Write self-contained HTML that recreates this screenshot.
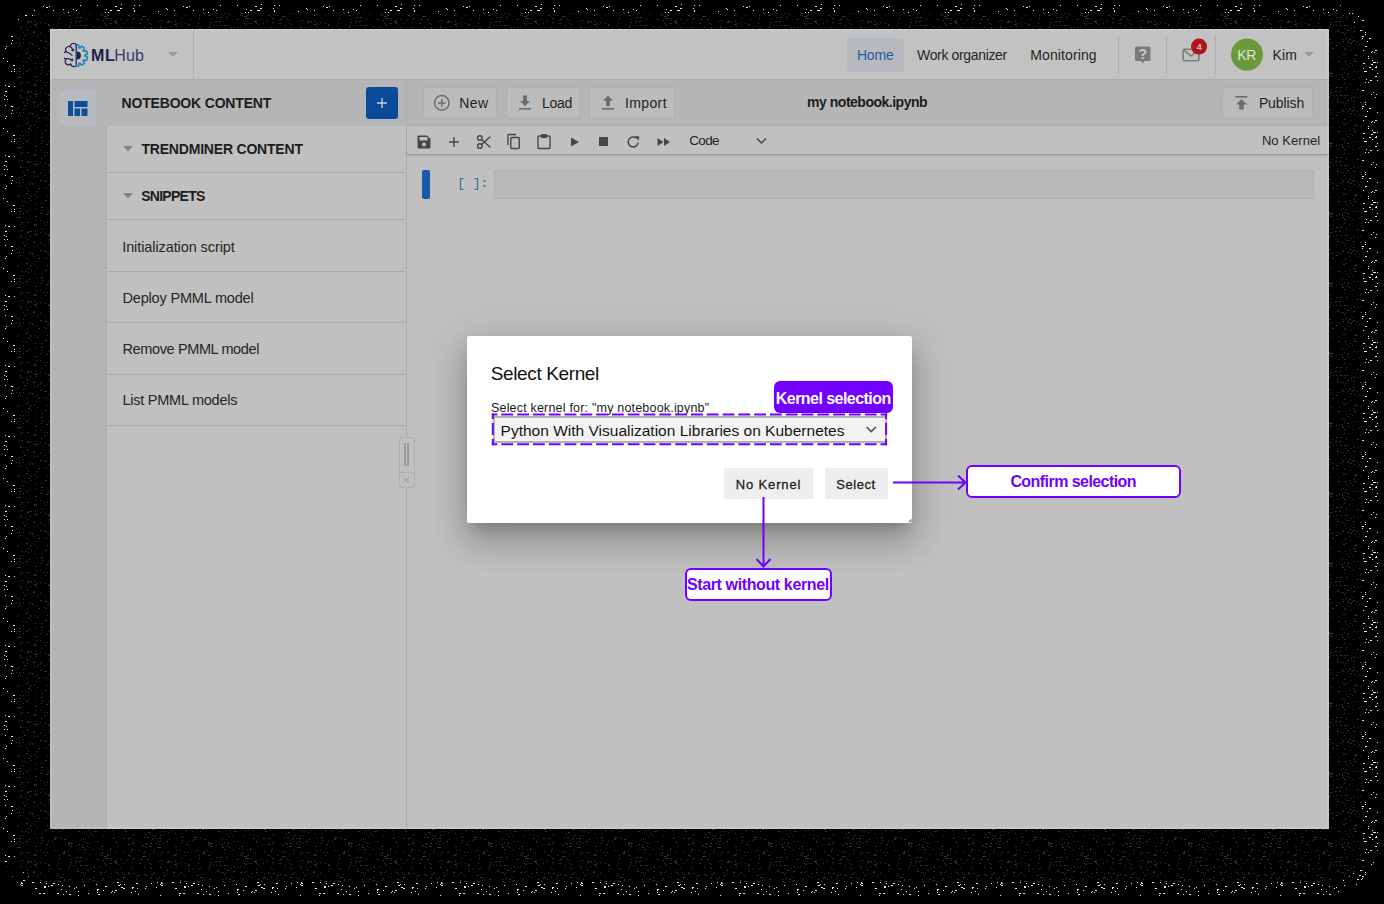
<!DOCTYPE html>
<html><head><meta charset='utf-8'><style>
html,body{margin:0;padding:0;background:#000;}
body{width:1384px;height:904px;background:#000;position:relative;overflow:hidden;font-family:"Liberation Sans",sans-serif;}
body>div,body>svg{position:absolute;box-sizing:border-box;}
</style></head><body>
<svg style='left:0;top:0' width='1384' height='904'><defs>
<pattern id='pb' width='140' height='70' patternUnits='userSpaceOnUse'><path fill='#e8e8e8' d='M21 0h1v1h-1zM49 0h2v1h-2zM136 0h1v1h-1zM11 1h1v1h-1zM14 1h1v1h-1zM60 1h1v1h-1zM104 1h2v1h-2zM106 1h1v1h-1zM120 1h1v1h-1zM64 2h1v1h-1zM89 2h2v1h-2zM135 2h2v1h-2zM27 3h1v1h-1zM36 3h1v1h-1zM62 3h1v1h-1zM78 3h1v1h-1zM117 3h2v1h-2zM121 4h1v1h-1zM80 5h1v1h-1zM97 5h1v1h-1zM134 5h1v1h-1zM139 5h1v1h-1zM43 6h1v1h-1zM49 6h1v1h-1zM115 6h2v1h-2zM46 7h2v1h-2zM26 8h1v1h-1zM120 8h2v1h-2zM133 8h1v1h-1zM27 9h1v1h-1zM63 9h1v1h-1zM73 9h1v1h-1zM106 9h1v1h-1zM34 10h1v1h-1zM53 10h1v1h-1zM76 10h1v1h-1zM110 10h2v1h-2zM117 10h2v1h-2zM119 10h1v1h-1zM134 10h1v1h-1zM18 11h1v1h-1zM134 11h1v1h-1zM68 12h1v1h-1zM105 12h1v1h-1zM108 12h1v1h-1zM0 13h2v1h-2zM50 13h1v1h-1zM52 13h1v1h-1zM89 13h1v1h-1zM92 13h1v1h-1zM63 14h1v1h-1zM5 15h1v1h-1zM18 15h2v1h-2zM25 15h2v1h-2zM32 15h1v1h-1zM83 15h1v1h-1zM1 16h1v1h-1zM8 16h2v1h-2zM14 16h1v1h-1zM53 16h1v1h-1zM98 16h1v1h-1zM129 16h2v1h-2zM83 17h2v1h-2zM137 17h1v1h-1zM55 18h1v1h-1zM121 18h1v1h-1zM135 18h1v1h-1zM18 19h1v1h-1zM47 19h2v1h-2zM67 19h2v1h-2zM127 19h1v1h-1zM44 20h1v1h-1zM102 20h2v1h-2zM103 20h1v1h-1zM5 21h2v1h-2zM27 21h1v1h-1zM63 21h1v1h-1zM43 22h1v1h-1zM94 22h1v1h-1zM113 22h1v1h-1zM24 23h1v1h-1zM76 23h1v1h-1zM87 23h1v1h-1zM91 23h2v1h-2zM126 23h2v1h-2zM25 24h2v1h-2zM85 24h1v1h-1zM93 24h1v1h-1zM111 24h1v1h-1zM116 24h1v1h-1zM126 24h1v1h-1zM4 25h1v1h-1zM58 25h1v1h-1zM64 25h1v1h-1zM84 25h1v1h-1zM6 26h1v1h-1zM30 26h2v1h-2zM120 26h2v1h-2zM124 26h1v1h-1zM29 27h1v1h-1zM86 27h1v1h-1zM115 27h1v1h-1zM32 28h2v1h-2zM39 28h2v1h-2zM40 28h2v1h-2zM119 28h1v1h-1zM4 29h1v1h-1zM7 29h1v1h-1zM69 29h1v1h-1zM77 29h1v1h-1zM125 29h1v1h-1zM24 30h1v1h-1zM58 30h1v1h-1zM71 30h1v1h-1zM100 30h2v1h-2zM132 30h1v1h-1zM61 31h2v1h-2zM118 31h1v1h-1zM23 32h1v1h-1zM31 32h1v1h-1zM75 32h1v1h-1zM105 32h1v1h-1zM126 32h1v1h-1zM131 32h1v1h-1zM29 33h2v1h-2zM93 33h1v1h-1zM139 33h1v1h-1zM53 34h2v1h-2zM56 34h1v1h-1zM90 34h1v1h-1zM105 34h1v1h-1zM5 35h1v1h-1zM99 35h2v1h-2zM136 35h1v1h-1zM11 36h2v1h-2zM28 36h1v1h-1zM37 36h1v1h-1zM40 36h1v1h-1zM89 36h1v1h-1zM102 36h2v1h-2zM49 37h1v1h-1zM102 38h1v1h-1zM109 38h2v1h-2zM128 38h1v1h-1zM137 38h1v1h-1zM37 39h1v1h-1zM77 39h1v1h-1zM97 39h1v1h-1zM98 39h1v1h-1zM101 39h1v1h-1zM12 40h1v1h-1zM23 40h2v1h-2zM66 40h1v1h-1zM83 40h1v1h-1zM133 40h1v1h-1zM107 41h1v1h-1zM17 42h1v1h-1zM21 42h1v1h-1zM32 42h2v1h-2zM40 42h1v1h-1zM117 42h2v1h-2zM11 43h1v1h-1zM21 43h2v1h-2zM46 43h1v1h-1zM53 43h2v1h-2zM136 43h2v1h-2zM20 44h1v1h-1zM58 44h1v1h-1zM96 44h1v1h-1zM120 44h1v1h-1zM124 44h1v1h-1zM21 45h2v1h-2zM51 45h2v1h-2zM62 45h1v1h-1zM84 45h1v1h-1zM118 45h2v1h-2zM6 46h1v1h-1zM44 46h2v1h-2zM48 46h1v1h-1zM69 46h1v1h-1zM105 46h2v1h-2zM16 47h1v1h-1zM44 47h2v1h-2zM76 47h1v1h-1zM121 47h2v1h-2zM132 47h2v1h-2zM5 48h1v1h-1zM35 48h2v1h-2zM74 48h1v1h-1zM123 48h2v1h-2zM132 48h1v1h-1zM137 48h1v1h-1zM61 49h1v1h-1zM97 49h2v1h-2zM97 50h1v1h-1zM103 50h1v1h-1zM115 50h2v1h-2zM66 51h1v1h-1zM78 51h1v1h-1zM112 51h1v1h-1zM135 51h1v1h-1zM97 52h1v1h-1zM111 52h1v1h-1zM114 52h1v1h-1zM131 52h1v1h-1zM39 53h2v1h-2zM43 53h2v1h-2zM57 53h2v1h-2zM88 53h1v1h-1zM63 54h1v1h-1zM69 54h2v1h-2zM98 54h2v1h-2zM138 54h1v1h-1zM20 55h1v1h-1zM39 55h1v1h-1zM78 55h1v1h-1zM30 56h1v1h-1zM71 56h1v1h-1zM108 56h1v1h-1zM131 56h1v1h-1zM41 57h1v1h-1zM59 57h1v1h-1zM65 57h1v1h-1zM76 57h2v1h-2zM3 58h1v1h-1zM16 58h1v1h-1zM35 58h1v1h-1zM64 58h1v1h-1zM83 58h1v1h-1zM108 58h1v1h-1zM29 59h1v1h-1zM121 59h1v1h-1zM16 60h1v1h-1zM19 60h1v1h-1zM38 60h1v1h-1zM112 60h1v1h-1zM7 61h1v1h-1zM46 61h1v1h-1zM79 61h1v1h-1zM90 61h1v1h-1zM95 61h1v1h-1zM1 62h1v1h-1zM45 62h1v1h-1zM96 62h1v1h-1zM113 62h1v1h-1zM114 62h2v1h-2zM117 62h2v1h-2zM119 62h2v1h-2zM126 62h1v1h-1zM133 62h2v1h-2zM21 63h1v1h-1zM48 63h1v1h-1zM56 63h2v1h-2zM103 63h1v1h-1zM104 63h1v1h-1zM38 64h1v1h-1zM111 64h2v1h-2zM136 64h1v1h-1zM13 65h2v1h-2zM20 65h1v1h-1zM34 65h1v1h-1zM49 65h1v1h-1zM91 65h1v1h-1zM61 66h1v1h-1zM116 66h1v1h-1zM122 66h2v1h-2zM38 67h1v1h-1zM109 67h2v1h-2zM115 67h2v1h-2zM43 68h2v1h-2zM103 68h1v1h-1zM118 68h2v1h-2zM121 68h1v1h-1zM132 68h2v1h-2zM14 69h1v1h-1zM28 69h2v1h-2zM112 69h1v1h-1zM118 69h1v1h-1zM136 69h1v1h-1z'/></pattern>
<pattern id='pd' width='140' height='70' patternUnits='userSpaceOnUse' x='37' y='23'><path fill='#343434' d='M0 0h1v1h-1zM8 0h1v1h-1zM21 0h1v1h-1zM67 0h1v1h-1zM72 0h1v1h-1zM74 0h1v1h-1zM79 0h1v1h-1zM86 0h1v1h-1zM102 0h2v1h-2zM112 0h1v1h-1zM11 1h1v1h-1zM33 1h1v1h-1zM69 1h1v1h-1zM81 1h1v1h-1zM114 1h1v1h-1zM137 1h2v1h-2zM138 1h2v1h-2zM11 2h2v1h-2zM12 2h1v1h-1zM20 2h1v1h-1zM36 2h1v1h-1zM39 2h1v1h-1zM43 2h2v1h-2zM47 2h1v1h-1zM49 2h2v1h-2zM68 2h1v1h-1zM108 2h1v1h-1zM123 2h1v1h-1zM32 3h1v1h-1zM56 3h1v1h-1zM63 3h1v1h-1zM133 3h1v1h-1zM139 3h1v1h-1zM32 4h1v1h-1zM57 4h1v1h-1zM61 4h1v1h-1zM83 4h1v1h-1zM94 4h1v1h-1zM107 4h1v1h-1zM113 4h1v1h-1zM123 4h2v1h-2zM128 4h1v1h-1zM15 5h1v1h-1zM22 5h1v1h-1zM23 5h1v1h-1zM48 5h1v1h-1zM54 5h1v1h-1zM114 5h1v1h-1zM12 6h1v1h-1zM31 6h1v1h-1zM40 6h1v1h-1zM79 6h1v1h-1zM96 6h1v1h-1zM130 6h1v1h-1zM50 7h2v1h-2zM130 7h1v1h-1zM11 8h1v1h-1zM40 8h2v1h-2zM56 8h2v1h-2zM69 8h1v1h-1zM137 8h1v1h-1zM4 9h1v1h-1zM44 9h1v1h-1zM46 9h1v1h-1zM63 9h2v1h-2zM67 9h1v1h-1zM79 9h2v1h-2zM85 9h1v1h-1zM91 9h1v1h-1zM117 9h1v1h-1zM126 9h1v1h-1zM136 9h2v1h-2zM3 10h1v1h-1zM48 10h1v1h-1zM74 10h1v1h-1zM91 10h2v1h-2zM96 10h2v1h-2zM116 10h1v1h-1zM130 10h1v1h-1zM1 11h1v1h-1zM26 11h1v1h-1zM64 11h1v1h-1zM81 11h1v1h-1zM87 11h1v1h-1zM103 11h1v1h-1zM107 11h1v1h-1zM114 11h2v1h-2zM7 12h1v1h-1zM20 12h2v1h-2zM47 12h1v1h-1zM93 12h1v1h-1zM100 12h2v1h-2zM108 12h2v1h-2zM127 12h2v1h-2zM0 13h1v1h-1zM71 13h1v1h-1zM137 13h1v1h-1zM23 14h2v1h-2zM24 14h2v1h-2zM56 14h1v1h-1zM74 14h1v1h-1zM86 14h1v1h-1zM87 14h2v1h-2zM94 14h1v1h-1zM100 14h1v1h-1zM113 14h2v1h-2zM114 14h1v1h-1zM122 14h1v1h-1zM49 15h1v1h-1zM66 15h1v1h-1zM86 15h1v1h-1zM104 15h1v1h-1zM119 15h1v1h-1zM27 16h1v1h-1zM32 16h2v1h-2zM45 16h1v1h-1zM52 16h2v1h-2zM65 16h1v1h-1zM80 16h2v1h-2zM90 16h1v1h-1zM99 16h1v1h-1zM121 16h1v1h-1zM126 16h1v1h-1zM3 17h2v1h-2zM20 17h1v1h-1zM27 17h1v1h-1zM56 17h2v1h-2zM57 17h1v1h-1zM65 17h1v1h-1zM102 17h1v1h-1zM7 18h2v1h-2zM9 18h1v1h-1zM13 18h1v1h-1zM17 18h1v1h-1zM21 18h1v1h-1zM22 18h2v1h-2zM45 18h2v1h-2zM51 18h1v1h-1zM55 18h1v1h-1zM60 18h1v1h-1zM84 18h2v1h-2zM100 18h1v1h-1zM107 18h1v1h-1zM33 19h1v1h-1zM41 19h1v1h-1zM50 19h1v1h-1zM69 19h1v1h-1zM74 19h1v1h-1zM75 19h1v1h-1zM96 19h1v1h-1zM118 19h2v1h-2zM122 19h1v1h-1zM126 19h1v1h-1zM132 19h1v1h-1zM15 20h1v1h-1zM35 20h1v1h-1zM43 20h1v1h-1zM53 20h2v1h-2zM77 20h2v1h-2zM122 20h1v1h-1zM134 20h2v1h-2zM11 21h1v1h-1zM20 21h1v1h-1zM32 21h1v1h-1zM58 21h1v1h-1zM62 21h1v1h-1zM78 21h1v1h-1zM89 21h2v1h-2zM90 21h1v1h-1zM102 21h1v1h-1zM104 21h1v1h-1zM112 21h1v1h-1zM132 21h1v1h-1zM135 21h1v1h-1zM0 22h1v1h-1zM24 22h1v1h-1zM39 22h1v1h-1zM40 22h1v1h-1zM76 22h1v1h-1zM100 22h1v1h-1zM123 22h1v1h-1zM52 23h1v1h-1zM61 23h1v1h-1zM72 23h1v1h-1zM121 23h1v1h-1zM137 23h1v1h-1zM7 24h1v1h-1zM24 24h1v1h-1zM100 24h2v1h-2zM112 24h1v1h-1zM1 25h2v1h-2zM9 25h1v1h-1zM21 25h1v1h-1zM35 25h2v1h-2zM48 25h1v1h-1zM106 25h1v1h-1zM130 25h1v1h-1zM24 26h1v1h-1zM47 26h1v1h-1zM84 26h2v1h-2zM104 26h1v1h-1zM21 27h2v1h-2zM26 27h1v1h-1zM53 27h1v1h-1zM73 27h2v1h-2zM87 27h1v1h-1zM21 28h2v1h-2zM96 28h1v1h-1zM101 28h2v1h-2zM131 28h1v1h-1zM139 28h1v1h-1zM45 29h1v1h-1zM77 29h2v1h-2zM25 30h1v1h-1zM49 30h1v1h-1zM72 30h2v1h-2zM98 30h1v1h-1zM129 30h2v1h-2zM46 31h2v1h-2zM59 31h1v1h-1zM79 31h2v1h-2zM84 31h1v1h-1zM102 31h1v1h-1zM109 31h1v1h-1zM10 32h1v1h-1zM57 32h1v1h-1zM58 32h2v1h-2zM99 32h1v1h-1zM121 32h1v1h-1zM133 32h1v1h-1zM137 32h1v1h-1zM19 33h2v1h-2zM63 33h1v1h-1zM67 33h1v1h-1zM104 33h1v1h-1zM120 33h1v1h-1zM133 33h1v1h-1zM0 34h1v1h-1zM31 34h1v1h-1zM34 34h1v1h-1zM42 34h1v1h-1zM70 34h1v1h-1zM80 34h1v1h-1zM81 34h1v1h-1zM112 34h1v1h-1zM18 35h1v1h-1zM21 35h2v1h-2zM56 35h1v1h-1zM74 35h2v1h-2zM97 35h1v1h-1zM100 35h1v1h-1zM131 35h1v1h-1zM132 35h1v1h-1zM19 36h1v1h-1zM25 36h2v1h-2zM29 36h1v1h-1zM57 36h1v1h-1zM71 36h1v1h-1zM87 36h1v1h-1zM88 36h1v1h-1zM108 36h1v1h-1zM115 36h1v1h-1zM116 36h2v1h-2zM8 37h2v1h-2zM52 37h1v1h-1zM75 37h1v1h-1zM93 37h1v1h-1zM134 37h1v1h-1zM15 38h1v1h-1zM23 38h1v1h-1zM41 38h2v1h-2zM48 38h1v1h-1zM57 38h2v1h-2zM59 38h1v1h-1zM68 38h1v1h-1zM88 38h2v1h-2zM125 38h1v1h-1zM128 38h1v1h-1zM111 39h1v1h-1zM112 39h1v1h-1zM131 39h1v1h-1zM4 40h1v1h-1zM53 40h1v1h-1zM138 40h1v1h-1zM49 41h1v1h-1zM72 41h1v1h-1zM77 41h1v1h-1zM96 41h1v1h-1zM108 41h1v1h-1zM55 42h1v1h-1zM66 42h1v1h-1zM96 42h1v1h-1zM115 42h1v1h-1zM118 42h1v1h-1zM123 42h1v1h-1zM126 42h1v1h-1zM51 43h1v1h-1zM81 43h1v1h-1zM117 43h1v1h-1zM4 44h2v1h-2zM17 44h2v1h-2zM19 44h1v1h-1zM107 44h1v1h-1zM110 44h2v1h-2zM23 45h1v1h-1zM46 45h1v1h-1zM76 45h2v1h-2zM86 45h2v1h-2zM91 45h2v1h-2zM116 45h1v1h-1zM119 45h1v1h-1zM122 45h2v1h-2zM139 45h1v1h-1zM17 46h2v1h-2zM27 46h2v1h-2zM44 46h1v1h-1zM48 46h1v1h-1zM115 46h1v1h-1zM132 46h1v1h-1zM5 47h1v1h-1zM15 47h1v1h-1zM11 48h1v1h-1zM57 48h1v1h-1zM61 48h1v1h-1zM79 48h1v1h-1zM96 48h1v1h-1zM120 48h1v1h-1zM122 48h2v1h-2zM129 48h2v1h-2zM5 49h1v1h-1zM31 49h2v1h-2zM47 49h1v1h-1zM79 49h1v1h-1zM3 50h1v1h-1zM28 50h1v1h-1zM32 50h2v1h-2zM34 50h2v1h-2zM50 50h2v1h-2zM95 50h2v1h-2zM108 50h2v1h-2zM113 50h2v1h-2zM119 50h1v1h-1zM126 50h1v1h-1zM9 51h2v1h-2zM31 51h1v1h-1zM34 51h1v1h-1zM42 51h1v1h-1zM45 51h1v1h-1zM85 51h1v1h-1zM91 51h2v1h-2zM110 51h1v1h-1zM122 51h1v1h-1zM32 52h1v1h-1zM39 52h1v1h-1zM45 52h1v1h-1zM105 52h2v1h-2zM33 53h2v1h-2zM50 53h1v1h-1zM64 53h1v1h-1zM65 53h1v1h-1zM80 53h1v1h-1zM112 53h2v1h-2zM114 53h1v1h-1zM138 53h2v1h-2zM45 54h2v1h-2zM52 54h1v1h-1zM109 54h1v1h-1zM120 54h2v1h-2zM121 54h1v1h-1zM122 54h2v1h-2zM62 55h1v1h-1zM73 55h1v1h-1zM41 56h1v1h-1zM47 56h2v1h-2zM56 56h1v1h-1zM65 56h1v1h-1zM73 56h1v1h-1zM94 56h2v1h-2zM117 56h1v1h-1zM3 57h1v1h-1zM18 57h1v1h-1zM20 57h1v1h-1zM30 57h1v1h-1zM73 57h1v1h-1zM102 57h1v1h-1zM139 57h1v1h-1zM27 58h1v1h-1zM87 58h1v1h-1zM94 58h1v1h-1zM108 58h1v1h-1zM117 58h1v1h-1zM7 59h1v1h-1zM10 59h1v1h-1zM26 59h2v1h-2zM78 59h1v1h-1zM106 59h2v1h-2zM124 59h2v1h-2zM130 59h2v1h-2zM26 60h2v1h-2zM47 60h1v1h-1zM64 60h1v1h-1zM65 60h1v1h-1zM116 60h1v1h-1zM52 61h1v1h-1zM112 61h1v1h-1zM123 61h1v1h-1zM137 61h1v1h-1zM139 61h1v1h-1zM8 62h1v1h-1zM22 62h1v1h-1zM31 62h2v1h-2zM63 62h1v1h-1zM65 62h1v1h-1zM70 62h2v1h-2zM91 62h2v1h-2zM100 62h1v1h-1zM137 62h2v1h-2zM67 63h2v1h-2zM69 63h1v1h-1zM93 63h1v1h-1zM105 63h2v1h-2zM107 63h2v1h-2zM22 64h1v1h-1zM39 64h2v1h-2zM43 64h2v1h-2zM49 64h1v1h-1zM4 65h1v1h-1zM68 65h2v1h-2zM70 65h2v1h-2zM74 65h1v1h-1zM95 65h2v1h-2zM13 66h1v1h-1zM22 66h1v1h-1zM34 66h1v1h-1zM49 66h1v1h-1zM60 66h2v1h-2zM83 66h1v1h-1zM90 66h1v1h-1zM103 66h2v1h-2zM110 66h1v1h-1zM66 67h1v1h-1zM74 67h1v1h-1zM79 67h1v1h-1zM101 67h1v1h-1zM111 67h1v1h-1zM124 67h2v1h-2zM38 68h2v1h-2zM42 68h2v1h-2zM77 68h2v1h-2zM89 68h1v1h-1zM122 68h1v1h-1zM131 68h1v1h-1zM132 68h1v1h-1zM134 68h1v1h-1zM138 68h1v1h-1zM3 69h1v1h-1zM33 69h2v1h-2zM78 69h2v1h-2zM95 69h1v1h-1zM130 69h2v1h-2z'/></pattern>
</defs>
<path fill-rule='evenodd' fill='url(#pb)' d='M51 4 H1330 A48 48 0 0 1 1378 52 V848 A48 48 0 0 1 1330 896 H51 A48 48 0 0 1 3 848 V52 A48 48 0 0 1 51 4 Z M46 13 A30 30 0 0 0 16 43 V852 A30 30 0 0 0 46 882 H1332 A30 30 0 0 0 1362 852 V43 A30 30 0 0 0 1332 13 Z'/>
<path fill-rule='evenodd' fill='url(#pd)' d='M46 13 H1332 A30 30 0 0 1 1362 43 V852 A30 30 0 0 1 1332 882 H46 A30 30 0 0 1 16 852 V43 A30 30 0 0 1 46 13 Z M50 29 V829 H1329 V29 Z'/>
</svg>
<div style='left:50px;top:29px;width:1279px;height:800px;background:#c0c0c0;'></div>
<div style='left:50px;top:29px;width:1279px;height:50px;background:#c2c2c2;'></div>
<div style='left:50px;top:79px;width:1279px;height:1px;background:#adadad;'></div>
<div style='left:193px;top:29px;width:1px;height:50px;background:#b0b0b0;'></div>
<svg style='left:64px;top:43px;' width='26' height='25' viewBox='0 0 26 25'>
<g fill='none' stroke='#25235a' stroke-width='1.25' stroke-linecap='round'>
<path d='M12.2 1.6 A3.3 3.3 0 0 0 6.3 3.6 A3.4 3.4 0 0 0 2.3 8.8 A3.4 3.4 0 0 0 2.4 15.8 A3.3 3.3 0 0 0 6.6 21 A3.3 3.3 0 0 0 12.2 22.6 Z'/>
<path d='M6.3 3.6 C7.8 4.8 9 6.2 9.2 7.8 M9.2 7.8 L7.8 7.2 M9.2 7.8 L9.8 6.5'/>
<path d='M2.3 8.8 C4.6 9.8 6.4 10.6 8 12.2'/>
<path d='M2.4 15.8 C4.5 15.4 6.6 15.8 8.6 17.6 M8.6 17.6 L7.2 17.7 M8.6 17.6 L8.5 16.2'/>
</g>
<path d='M12.9 8.6 A4 4 0 0 1 12.9 16.6 Z' fill='#1d1c4d'/>
<path d='M12.90 2.00 L13.08 2.00 L13.27 2.01 L13.45 2.01 L13.64 2.03 L13.82 2.04 L14.01 2.06 L14.19 2.08 L14.38 2.10 L14.56 2.13 L14.67 2.59 L14.76 3.05 L14.83 3.50 L14.89 3.96 L14.94 4.42 L14.97 4.87 L15.11 4.91 L15.24 4.95 L15.37 4.99 L15.50 5.04 L15.64 5.08 L15.77 5.13 L16.06 4.78 L16.36 4.44 L16.68 4.10 L17.01 3.78 L17.36 3.46 L17.71 3.16 L17.88 3.24 L18.04 3.33 L18.20 3.42 L18.36 3.51 L18.52 3.61 L18.67 3.71 L18.83 3.81 L18.98 3.92 L19.13 4.02 L19.28 4.13 L19.43 4.25 L19.57 4.36 L19.71 4.48 L19.85 4.60 L19.99 4.72 L20.13 4.85 L20.26 4.97 L20.40 5.10 L20.21 5.54 L20.02 5.96 L19.81 6.38 L19.59 6.78 L19.36 7.18 L19.12 7.57 L19.20 7.67 L19.29 7.79 L19.37 7.90 L19.45 8.01 L19.53 8.13 L19.61 8.24 L20.05 8.13 L20.50 8.03 L20.95 7.95 L21.41 7.88 L21.88 7.83 L22.34 7.79 L22.43 7.95 L22.51 8.12 L22.58 8.29 L22.66 8.46 L22.73 8.63 L22.80 8.80 L22.86 8.97 L22.92 9.15 L22.98 9.32 L23.04 9.50 L23.09 9.68 L23.14 9.86 L23.19 10.04 L23.23 10.22 L23.27 10.40 L23.31 10.58 L23.34 10.76 L23.37 10.94 L22.97 11.19 L22.56 11.41 L22.15 11.63 L21.73 11.83 L21.31 12.01 L20.89 12.18 L20.90 12.32 L20.90 12.46 L20.90 12.60 L20.90 12.74 L20.90 12.88 L20.89 13.02 L21.31 13.19 L21.73 13.37 L22.15 13.57 L22.56 13.79 L22.97 14.01 L23.37 14.26 L23.34 14.44 L23.31 14.62 L23.27 14.80 L23.23 14.98 L23.19 15.16 L23.14 15.34 L23.09 15.52 L23.04 15.70 L22.98 15.88 L22.92 16.05 L22.86 16.23 L22.80 16.40 L22.73 16.57 L22.66 16.74 L22.58 16.91 L22.51 17.08 L22.43 17.25 L22.34 17.41 L21.88 17.37 L21.41 17.32 L20.95 17.25 L20.50 17.17 L20.05 17.07 L19.61 16.96 L19.53 17.07 L19.45 17.19 L19.37 17.30 L19.29 17.41 L19.20 17.53 L19.12 17.63 L19.36 18.02 L19.59 18.42 L19.81 18.82 L20.02 19.24 L20.21 19.66 L20.40 20.10 L20.26 20.23 L20.13 20.35 L19.99 20.48 L19.85 20.60 L19.71 20.72 L19.57 20.84 L19.43 20.95 L19.28 21.07 L19.13 21.18 L18.98 21.28 L18.83 21.39 L18.67 21.49 L18.52 21.59 L18.36 21.69 L18.20 21.78 L18.04 21.87 L17.88 21.96 L17.71 22.04 L17.36 21.74 L17.01 21.42 L16.68 21.10 L16.36 20.76 L16.06 20.42 L15.77 20.07 L15.64 20.12 L15.50 20.16 L15.37 20.21 L15.24 20.25 L15.11 20.29 L14.97 20.33 L14.94 20.78 L14.89 21.24 L14.83 21.70 L14.76 22.15 L14.67 22.61 L14.56 23.07 L14.38 23.10 L14.19 23.12 L14.01 23.14 L13.82 23.16 L13.64 23.17 L13.45 23.19 L13.27 23.19 L13.08 23.20 L12.90 23.20' fill='none' stroke='#1f88c0' stroke-width='1.7' stroke-linejoin='round'/>
</svg>
<div style='left:91.00px;top:48px;font-family:"Liberation Sans";font-size:16px;font-weight:700;line-height:16px;height:16px;letter-spacing:0.775px;color:#1d1c4a;white-space:pre;'>ML</div>
<div style='left:114.25px;top:48px;font-family:"Liberation Sans";font-size:16px;font-weight:400;line-height:16px;height:16px;letter-spacing:0.100px;color:#3a3970;white-space:pre;'>Hub</div>
<svg style='left:167px;top:51px;' width='12' height='7' viewBox='0 0 12 7'><path d='M1 1 L11 1 L6 6 Z' fill='#9a9a9a'/></svg>
<div style='left:847px;top:38px;width:57px;height:34px;background:#b6babe;border-radius:3px;'></div>
<div style='left:856.88px;top:48px;font-family:"Liberation Sans";font-size:14px;font-weight:400;line-height:14px;height:14px;letter-spacing:-0.167px;color:#245a9e;white-space:pre;'>Home</div>
<div style='left:917.08px;top:48px;font-family:"Liberation Sans";font-size:14px;font-weight:400;line-height:14px;height:14px;letter-spacing:-0.352px;color:#262626;white-space:pre;'>Work organizer</div>
<div style='left:1030.28px;top:48px;font-family:"Liberation Sans";font-size:14px;font-weight:400;line-height:14px;height:14px;letter-spacing:0.103px;color:#262626;white-space:pre;'>Monitoring</div>
<div style='left:1118px;top:35px;width:1px;height:39px;background:#acacac;'></div>
<div style='left:1166px;top:35px;width:1px;height:39px;background:#acacac;'></div>
<div style='left:1215px;top:35px;width:1px;height:39px;background:#acacac;'></div>
<svg style='left:1134px;top:45px;' width='18' height='20' viewBox='0 0 18 20'><rect x='1' y='1.5' width='15.5' height='14.5' rx='1.5' fill='#7a7a7a'/><path d='M7 16 L8.75 18.5 L10.5 16 Z' fill='#7a7a7a'/><text x='8.75' y='14' font-family='Liberation Sans' font-size='14' font-weight='700' fill='#c8c8c8' text-anchor='middle'>?</text></svg>
<svg style='left:1181px;top:47px;' width='20' height='16' viewBox='0 0 20 16'><rect x='2.2' y='2.2' width='15.6' height='11.6' rx='1.2' fill='none' stroke='#7c7c7c' stroke-width='1.6'/><path d='M2.6 3 L10 9 L17.4 3' fill='none' stroke='#7c7c7c' stroke-width='1.6'/></svg>
<svg style='left:1190px;top:38px;' width='18' height='18' viewBox='0 0 18 18'><circle cx='9' cy='8.6' r='8' fill='#b41217'/><text x='9.2' y='11.8' font-family='Liberation Sans' font-size='9' font-weight='700' fill='#dccccc' text-anchor='middle'>4</text></svg>
<svg style='left:1230px;top:38px;' width='34' height='34' viewBox='0 0 34 34'><circle cx='17' cy='16.6' r='16' fill='#6b983b'/></svg>
<div style='left:1237.17px;top:48px;font-family:"Liberation Sans";font-size:14px;font-weight:400;line-height:14px;height:14px;letter-spacing:-0.125px;color:#dde3d6;white-space:pre;'>KR</div>
<div style='left:1272.47px;top:47.5px;font-family:"Liberation Sans";font-size:14px;font-weight:400;line-height:14px;height:14px;letter-spacing:0.137px;color:#222222;white-space:pre;'>Kim</div>
<svg style='left:1303px;top:51px;' width='12' height='7' viewBox='0 0 12 7'><path d='M1 1 L11 1 L6 6 Z' fill='#999999'/></svg>
<div style='left:50px;top:80px;width:56px;height:749px;background:#b5b5b5;'></div>
<div style='left:58px;top:89px;width:39px;height:38px;background:#b7bbc0;border:1px solid #afb3b8;border-radius:3px;'></div>
<svg style='left:67px;top:100px;' width='22' height='17' viewBox='0 0 22 17'><rect x='1' y='1' width='5' height='15' fill='#0c4d9c'/><rect x='7.5' y='1' width='13' height='6' fill='#0c4d9c'/><rect x='7.5' y='8.5' width='5.5' height='7.5' fill='#0c4d9c'/><rect x='14.5' y='8.5' width='6' height='7.5' fill='#0c4d9c'/></svg>
<div style='left:106px;top:80px;width:301px;height:46px;background:#b5b5b5;'></div>
<div style='left:121.53px;top:96px;font-family:"Liberation Sans";font-size:14px;font-weight:700;line-height:14px;height:14px;letter-spacing:-0.178px;color:#1d1d1d;white-space:pre;'>NOTEBOOK CONTENT</div>
<div style='left:366px;top:87px;width:32px;height:32px;background:#0b4a98;border-radius:3px;'></div>
<svg style='left:374px;top:95px;' width='16' height='16' viewBox='0 0 16 16'><path d='M8 3 V13 M3 8 H13' stroke='#c8cfdb' stroke-width='1.4'/></svg>
<div style='left:106px;top:126px;width:301px;height:703px;background:#c0c0c0;border-left:1px solid #adadad;border-right:1px solid #adadad;'></div>
<div style='left:107px;top:172px;width:299px;height:1px;background:#adadad;'></div>
<div style='left:107px;top:219px;width:299px;height:1px;background:#adadad;'></div>
<div style='left:107px;top:271px;width:299px;height:1px;background:#adadad;'></div>
<div style='left:107px;top:322px;width:299px;height:1px;background:#adadad;'></div>
<div style='left:107px;top:374px;width:299px;height:1px;background:#adadad;'></div>
<div style='left:107px;top:425px;width:299px;height:1px;background:#adadad;'></div>
<svg style='left:122px;top:145px;' width='12' height='8' viewBox='0 0 12 8'><path d='M1 1 L11 1 L6 6.5 Z' fill='#858585'/></svg>
<div style='left:141.47px;top:142px;font-family:"Liberation Sans";font-size:14px;font-weight:700;line-height:14px;height:14px;letter-spacing:-0.201px;color:#1d1d1d;white-space:pre;'>TRENDMINER CONTENT</div>
<svg style='left:122px;top:192px;' width='12' height='8' viewBox='0 0 12 8'><path d='M1 1 L11 1 L6 6.5 Z' fill='#858585'/></svg>
<div style='left:141.22px;top:189px;font-family:"Liberation Sans";font-size:14px;font-weight:700;line-height:14px;height:14px;letter-spacing:-0.736px;color:#1d1d1d;white-space:pre;'>SNIPPETS</div>
<div style='left:122.22px;top:239.5px;font-family:"Liberation Sans";font-size:14.5px;font-weight:400;line-height:14.5px;height:14.5px;letter-spacing:-0.094px;color:#262626;white-space:pre;'>Initialization script</div>
<div style='left:122.47px;top:290.5px;font-family:"Liberation Sans";font-size:14.5px;font-weight:400;line-height:14.5px;height:14.5px;letter-spacing:-0.175px;color:#262626;white-space:pre;'>Deploy PMML model</div>
<div style='left:122.47px;top:342px;font-family:"Liberation Sans";font-size:14.5px;font-weight:400;line-height:14.5px;height:14.5px;letter-spacing:-0.372px;color:#262626;white-space:pre;'>Remove PMML model</div>
<div style='left:122.47px;top:393px;font-family:"Liberation Sans";font-size:14.5px;font-weight:400;line-height:14.5px;height:14.5px;letter-spacing:-0.248px;color:#262626;white-space:pre;'>List PMML models</div>
<div style='left:399px;top:437px;width:16px;height:51px;background:#c0c0c0;border:1px solid #b0b0b0;border-radius:3px;'></div>
<div style='left:399px;top:472px;width:16px;height:1px;background:#b0b0b0;'></div>
<div style='left:404px;top:443px;width:2px;height:23px;background:#9a9a9a;'></div>
<div style='left:407px;top:443px;width:2px;height:23px;background:#9a9a9a;'></div>
<svg style='left:402px;top:476px;' width='8' height='8' viewBox='0 0 8 8'><path d='M1 1 L7 7 M7 1 L1 7' stroke='#9a9a9a' stroke-width='1'/></svg>
<div style='left:406px;top:80px;width:1px;height:46px;background:#adadad;'></div>
<div style='left:407px;top:80px;width:922px;height:46px;background:#b5b5b5;border-bottom:1px solid #adadad;'></div>
<div style='left:423px;top:87px;width:74px;height:32px;background:#bcbcbc;border:1px solid #afafaf;border-radius:3px;'></div>
<div style='left:506px;top:87px;width:74px;height:32px;background:#bcbcbc;border:1px solid #afafaf;border-radius:3px;'></div>
<div style='left:589px;top:87px;width:86px;height:32px;background:#bcbcbc;border:1px solid #afafaf;border-radius:3px;'></div>
<div style='left:1222px;top:87px;width:91px;height:32px;background:#bcbcbc;border:1px solid #afafaf;border-radius:3px;'></div>
<svg style='left:432px;top:94px;' width='20' height='18' viewBox='0 0 20 18'><circle cx='9.8' cy='8.9' r='7.3' fill='none' stroke='#6e6e6e' stroke-width='1.5'/><path d='M9.8 5 V12.8 M5.9 8.9 H13.7' stroke='#6e6e6e' stroke-width='1.5'/></svg>
<div style='left:459.27px;top:95.5px;font-family:"Liberation Sans";font-size:14px;font-weight:400;line-height:14px;height:14px;letter-spacing:0.412px;color:#1f1f1f;white-space:pre;'>New</div>
<svg style='left:517px;top:94px;' width='16' height='17' viewBox='0 0 16 17'><path d='M6 1.5 H10 V7 H13 L8 12 L3 7 H6 Z' fill='#6e6e6e'/><rect x='2' y='14' width='12' height='1.6' fill='#6e6e6e'/></svg>
<div style='left:541.88px;top:95.5px;font-family:"Liberation Sans";font-size:14px;font-weight:400;line-height:14px;height:14px;letter-spacing:-0.275px;color:#1f1f1f;white-space:pre;'>Load</div>
<svg style='left:600px;top:94px;' width='16' height='17' viewBox='0 0 16 17'><path d='M8 1.5 L13 6.5 H10 V12 H6 V6.5 H3 Z' fill='#6e6e6e'/><rect x='2' y='14' width='12' height='1.6' fill='#6e6e6e'/></svg>
<div style='left:624.95px;top:95.5px;font-family:"Liberation Sans";font-size:14px;font-weight:400;line-height:14px;height:14px;letter-spacing:0.390px;color:#1f1f1f;white-space:pre;'>Import</div>
<div style='left:807.12px;top:95.2px;font-family:"Liberation Sans";font-size:14px;font-weight:700;line-height:14px;height:14px;letter-spacing:-0.492px;color:#1d1d1d;white-space:pre;'>my notebook.ipynb</div>
<svg style='left:1234px;top:95px;' width='15' height='16' viewBox='0 0 15 16'><rect x='1.5' y='1' width='12' height='1.6' fill='#6e6e6e'/><path d='M7.5 4 L13 9.5 H9.8 V14.5 H5.2 V9.5 H2 Z' fill='#6e6e6e'/></svg>
<div style='left:1258.88px;top:95.7px;font-family:"Liberation Sans";font-size:14px;font-weight:400;line-height:14px;height:14px;letter-spacing:-0.096px;color:#1f1f1f;white-space:pre;'>Publish</div>
<div style='left:407px;top:126px;width:922px;height:29px;background:#c0c0c0;border-bottom:1px solid #9e9e9e;box-shadow:0 1px 2px rgba(0,0,0,0.12);'></div>
<svg style='left:416px;top:134px;' width='16' height='16' viewBox='0 0 16 16'><path d='M1.5 2.5 Q1.5 1.5 2.5 1.5 H11 L14.5 5 V13.5 Q14.5 14.5 13.5 14.5 H2.5 Q1.5 14.5 1.5 13.5 Z' fill='#464646'/><rect x='3.5' y='3' width='8' height='3.5' fill='#c0c0c0'/><circle cx='8' cy='10.5' r='2' fill='#c0c0c0'/></svg>
<svg style='left:447px;top:135px;' width='14' height='14' viewBox='0 0 14 14'><path d='M7 2 V12 M2 7 H12' stroke='#464646' stroke-width='1.4'/></svg>
<svg style='left:476px;top:134px;' width='16' height='16' viewBox='0 0 16 16'><g fill='none' stroke='#464646' stroke-width='1.4'><circle cx='3.8' cy='4' r='2.3'/><circle cx='3.8' cy='12' r='2.3'/><path d='M5.5 5.5 L14.5 13.5 M5.5 10.5 L14.5 2.5'/></g></svg>
<svg style='left:505px;top:133px;' width='17' height='17' viewBox='0 0 17 17'><g fill='none' stroke='#464646' stroke-width='1.4'><path d='M3 12 V2.5 Q3 1.5 4 1.5 H11'/><rect x='5.8' y='4.5' width='8.5' height='11' rx='1'/></g></svg>
<svg style='left:536px;top:133px;' width='16' height='17' viewBox='0 0 16 17'><g fill='none' stroke='#464646' stroke-width='1.4'><rect x='2' y='3' width='12' height='12.5' rx='1'/></g><rect x='5' y='1' width='6' height='4' rx='0.8' fill='#464646'/></svg>
<svg style='left:569px;top:136px;' width='12' height='12' viewBox='0 0 12 12'><path d='M2 1.5 L10 6 L2 10.5 Z' fill='#464646'/></svg>
<div style='left:599px;top:137px;width:9px;height:9px;background:#464646;'></div>
<svg style='left:626px;top:135px;' width='15' height='14' viewBox='0 0 15 14'><path d='M12.2 7.5 A5 5 0 1 1 10.5 3.2' fill='none' stroke='#464646' stroke-width='1.5'/><path d='M9 0.8 L13.5 1.5 L12.5 5.8 Z' fill='#464646'/></svg>
<svg style='left:656px;top:137px;' width='16' height='10' viewBox='0 0 16 10'><path d='M1.5 1 L7.5 5 L1.5 9 Z M8 1 L14 5 L8 9 Z' fill='#464646'/></svg>
<div style='left:689.17px;top:134px;font-family:"Liberation Sans";font-size:13.5px;font-weight:400;line-height:13.5px;height:13.5px;letter-spacing:-0.600px;color:#1f1f1f;white-space:pre;'>Code</div>
<svg style='left:755px;top:136px;' width='13' height='9' viewBox='0 0 13 9'><path d='M2 2.5 L6.5 7 L11 2.5' fill='none' stroke='#464646' stroke-width='1.4'/></svg>
<div style='left:1261.90px;top:134.3px;font-family:"Liberation Sans";font-size:13px;font-weight:400;line-height:13px;height:13px;letter-spacing:0.066px;color:#1f1f1f;white-space:pre;'>No Kernel</div>
<div style='left:422px;top:170px;width:8px;height:29px;background:#175aa5;border-radius:2px;'></div>
<div style='left:457.18px;top:176.5px;font-family:"Liberation Mono";font-size:13px;font-weight:400;line-height:13px;height:13px;letter-spacing:-0.025px;color:#3169a2;white-space:pre;'>[ ]:</div>
<div style='left:494px;top:170px;width:820px;height:29px;background:#b9b9b9;border:1px solid #afafaf;'></div>
<div style='left:50px;top:29px;width:1279px;height:800px;border:2px solid rgba(255,255,255,0.13);'></div>
<div style='left:467px;top:336px;width:445px;height:187px;background:#ffffff;border-radius:2px;box-shadow:0 10px 13px -6px rgba(0,0,0,0.2),0 20px 31px 3px rgba(0,0,0,0.14),0 8px 38px 7px rgba(0,0,0,0.12);'></div>
<div style='left:490.73px;top:364px;font-family:"Liberation Sans";font-size:19px;font-weight:400;line-height:19px;height:19px;letter-spacing:-0.373px;color:#111111;white-space:pre;'>Select Kernel</div>
<div style='left:490.98px;top:401.5px;font-family:"Liberation Sans";font-size:12.5px;font-weight:400;line-height:12.5px;height:12.5px;letter-spacing:0.193px;color:#1a1a1a;white-space:pre;'>Select kernel for: "my notebook.ipynb"</div>
<div style='left:493px;top:416px;width:394px;height:27px;background:#f3f3f3;border:2px solid #b1b3ae;'></div>
<div style='left:500.55px;top:423px;font-family:"Liberation Sans";font-size:15.5px;font-weight:400;line-height:15.5px;height:15.5px;letter-spacing:0.009px;color:#161616;white-space:pre;'>Python With Visualization Libraries on Kubernetes</div>
<svg style='left:864px;top:424px;' width='14' height='11' viewBox='0 0 14 11'><path d='M2.6 3 L7.25 7.6 L11.9 3' fill='none' stroke='#555' stroke-width='1.7'/></svg>
<div style='left:724px;top:468px;width:89px;height:31px;background:#eeeeee;'></div>
<div style='left:735.70px;top:478px;font-family:"Liberation Sans";font-size:13px;font-weight:400;line-height:13px;height:13px;letter-spacing:0.866px;color:#222222;white-space:pre;-webkit-text-stroke:0.3px #222;'>No Kernel</div>
<div style='left:825px;top:468px;width:63px;height:31px;background:#eeeeee;'></div>
<div style='left:836.17px;top:478px;font-family:"Liberation Sans";font-size:13px;font-weight:400;line-height:13px;height:13px;letter-spacing:0.585px;color:#222222;white-space:pre;-webkit-text-stroke:0.3px #222;'>Select</div>
<svg style='left:907px;top:518px;' width='5' height='5' viewBox='0 0 5 5'><path d='M4.5 0.5 L4.5 3.5 L1 4.5 Z' fill='#777'/></svg>
<svg style='left:488px;top:410px;' width='404' height='40' viewBox='0 0 404 40'><g stroke='#7200ff' stroke-width='2' stroke-dasharray='11.85 3.95' stroke-dashoffset='6.25' fill='none'><path d='M3.8 4.5 H399.1'/><path d='M3.8 34.3 H399.1'/><path d='M4.8 3.5 V35.3'/><path d='M398.1 3.5 V35.3'/></g></svg>
<div style='left:773.5px;top:381.4px;width:119.70000000000005px;height:31.600000000000023px;background:#7200ff;border-radius:6px;'></div>
<div style='left:775.80px;top:390.5px;font-family:"Liberation Sans";font-size:16px;font-weight:700;line-height:16px;height:16px;letter-spacing:-0.548px;color:#ffffff;white-space:pre;'>Kernel selection</div>
<svg style='left:890px;top:472px;' width='80' height='22' viewBox='0 0 80 22'><path d='M3 10.5 H75 M68 3.5 L75.5 10.5 L68 17.5' fill='none' stroke='#7200ff' stroke-width='2'/></svg>
<div style='left:966px;top:465px;width:215px;height:33px;background:#fff;border:2px solid #7200ff;border-radius:6px;'></div>
<div style='left:1010.38px;top:474.2px;font-family:"Liberation Sans";font-size:16px;font-weight:700;line-height:16px;height:16px;letter-spacing:-0.556px;color:#7200ff;white-space:pre;'>Confirm selection</div>
<svg style='left:753px;top:495px;' width='22' height='74' viewBox='0 0 22 74'><path d='M10.5 2 V71 M3.5 64 L10.5 71.5 L17.5 64' fill='none' stroke='#7200ff' stroke-width='2'/></svg>
<div style='left:684.5px;top:568px;width:147.0px;height:33px;background:#fff;border:2px solid #7200ff;border-radius:6px;'></div>
<div style='left:687.00px;top:577px;font-family:"Liberation Sans";font-size:16px;font-weight:700;line-height:16px;height:16px;letter-spacing:-0.382px;color:#7200ff;white-space:pre;'>Start without kernel</div>
</body></html>
